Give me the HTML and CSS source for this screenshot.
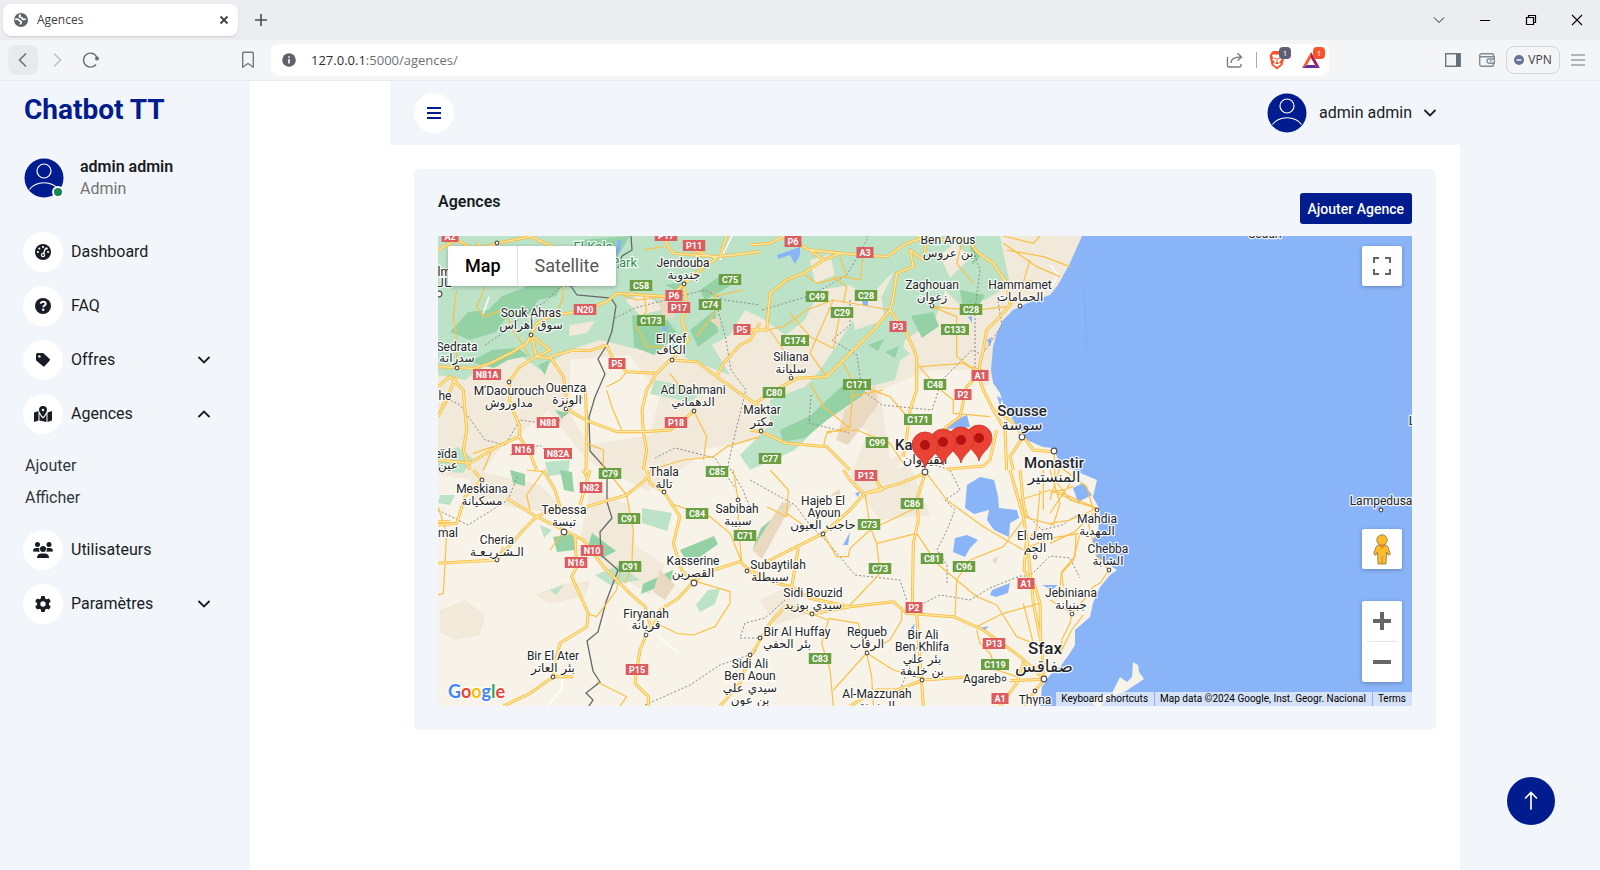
FILE: index.html
```html
<!DOCTYPE html>
<html lang="fr">
<head>
<meta charset="utf-8">
<title>Agences</title>
<link rel="stylesheet" href="styles.css">
</head>
<body>
<svg width="0" height="0" class="defs" aria-hidden="true">
  <symbol id="user" viewBox="0 0 40 40">
    <circle cx="20" cy="20" r="19.5" fill="#001c8e"/>
    <g fill="none" stroke="#fff" stroke-width="1.2"><circle cx="20" cy="13" r="7"/><path d="M5.5 31.5C12 22.500 28 22.500 34.500 31.500"/></g>
  </symbol>
  <symbol id="down" viewBox="0 0 12 12"><path d="M1 3.500l5 5 5-5" fill="none" stroke="#191c24" stroke-width="1.800" stroke-linecap="round"/></symbol>
  <symbol id="up" viewBox="0 0 12 12"><path d="M1 8.500l5-5 5 5" fill="none" stroke="#191c24" stroke-width="1.800" stroke-linecap="round"/></symbol>
</svg>

<header class="browser">
  <div class="tabs">
    <div class="tab">
      <svg width="16" height="16" viewBox="0 0 16 16"><circle cx="8" cy="8" r="7" fill="#5f6368"/><path d="M2 7.500c2-.8 3.500-.3 4.200.8.600 1 1.600.6 2 1.600.3 1-.9 1.300-.7 2.600M7.500 2.500c-.5 1.300-1.500 1-1 2.200.6 1 2.300.2 2.700 1.500.3 1.200 1.700 1.600 3.600.8" fill="none" stroke="#fff" stroke-width="1.700"/></svg>
      <span class="tab-title">Agences</span>
      <button class="bare" aria-label="Close tab"><svg width="10" height="10" viewBox="0 0 10 10"><path d="M1.500 1.500l7 7M8.500 1.500l-7 7" stroke="#3c4043" stroke-width="1.800"/></svg></button>
    </div>
    <button class="bare" aria-label="New tab"><svg width="14" height="14" viewBox="0 0 14 14"><path d="M7 1v12M1 7h12" stroke="#474a4e" stroke-width="1.600"/></svg></button>
    <div class="window-buttons">
      <button class="bare" aria-label="Search tabs"><svg width="12" height="12" viewBox="0 0 12 12"><path d="M1 3.500l5 5 5-5" fill="none" stroke="#222"/></svg></button>
      <button class="bare" aria-label="Minimize"><svg width="12" height="12" viewBox="0 0 12 12"><path d="M1 6.500h10" stroke="#000"/></svg></button>
      <button class="bare" aria-label="Restore"><svg width="12" height="12" viewBox="0 0 12 12"><path d="M1.500 3.500h7v7h-7zM3.500 3.500v-2h7v7h-2" fill="none" stroke="#000" stroke-width="1.200"/></svg></button>
      <button class="bare" aria-label="Close"><svg width="12" height="12" viewBox="0 0 12 12"><path d="M1 1l10 10M11 1L1 11" stroke="#000" stroke-width="1.100"/></svg></button>
    </div>
  </div>
  <div class="toolbar">
    <div class="nav-buttons">
      <button class="bare back" aria-label="Back"><svg width="16" height="16" viewBox="0 0 16 16"><path d="M11 1.500L4.500 8l6.500 6.500" fill="none" stroke="#5f7079" stroke-width="1.500"/></svg></button>
      <button class="bare" aria-label="Forward"><svg width="16" height="16" viewBox="0 0 16 16"><path d="M5 1.500L11.500 8 5 14.500" fill="none" stroke="#b9c3c8" stroke-width="1.500"/></svg></button>
      <button class="bare" aria-label="Reload"><svg width="18" height="16" viewBox="0 0 18 16"><path d="M15 5.500A7 7 0 1 0 14 12.500" fill="none" stroke="#5f7079" stroke-width="1.400"/><circle cx="15" cy="6.500" r="2" fill="#5f7079"/></svg></button>
      <button class="bare mark" aria-label="Bookmark"><svg width="14" height="18" viewBox="0 0 14 18"><path d="M1.700 2.500q0-1.300 1.300-1.300h8q1.300 0 1.300 1.300v13.800L7 12.500l-5.300 3.800z" fill="none" stroke="#6d7b83" stroke-width="1.400" stroke-linejoin="round"/></svg></button>
    </div>
    <div class="address">
      <svg width="14" height="14" viewBox="0 0 14 14"><circle cx="7" cy="7" r="6.800" fill="#5f6368"/><path d="M7 6v4.500M7 3.200v1.600" stroke="#fff" stroke-width="1.600"/></svg>
      <div class="url"><b>127.0.0.1</b>:5000/agences/</div>
      <button class="bare share" aria-label="Share"><svg width="18" height="18" viewBox="0 0 18 18"><path d="M1.500 6v8.500q0 1.500 1.500 1.500h10.500q1.500 0 1.500-1.500V13M5 12c0-4 3-6 10-6M11.500 2.200L15.500 6l-4 3.800" fill="none" stroke="#7b8083" stroke-width="1.400"/></svg></button>
      <i class="divider"></i>
      <button class="bare badge-holder" aria-label="Shields"><svg width="18" height="20" viewBox="0 0 18 20"><path d="M5 1h7l3 2 1.500 3-2 9L9 19.500 3.500 15l-2-9L3 3z" fill="#fb542b"/><path d="M4 5l3-.7 2 .6 2-.6 3 .7-1 3 .5 2-2.500 2L13 14l-4 3-4-3 2-2-2.500-2L5 8z" fill="#fff"/><path d="M6 8l2 .8M12 8l-2 .8M9 8v4l-1.500 1.500h3L9 12" stroke="#fb542b" fill="none"/></svg><span class="badge">1</span></button>
      <button class="bare badge-holder" aria-label="Rewards"><svg width="20" height="18" viewBox="0 0 20 18"><path d="M10 1L1 17l5-3 4-7z" fill="#ff5a2e"/><path d="M10 1l9 16-5-3-4-7z" fill="#9e1f63"/><path d="M1 17h18l-5-3H6z" fill="#662d91"/></svg><span class="badge hot">1</span></button>
    </div>
    <div class="extras">
      <button class="bare panel" aria-label="Sidebar"><svg width="16" height="14" viewBox="0 0 16 14"><path d="M.7.7h14.600v12.600H.7z" fill="none" stroke="#6a7b84" stroke-width="1.400"/><path d="M11 1h4v12h-4z" fill="#5f7079"/></svg></button>
      <button class="bare" aria-label="Wallet"><svg width="16" height="14" viewBox="0 0 16 14"><path d="M14.500 4V2q0-1.300-1.500-1.300H2.500Q.7.700.7 2.500v9q0 1.700 1.800 1.700H13q1.500 0 1.500-1.500v-1.500M1 3.700h14.300v6.500H10q-2-.2-2-2.200t2-2h5M11 8h1.500" fill="none" stroke="#7f8e96" stroke-width="1.400"/></svg></button>
      <button class="bare vpn"><svg width="10" height="10" viewBox="0 0 10 10"><circle cx="5" cy="5" r="5" fill="#6b7194"/><path d="M2.500 5h5" stroke="#fff" stroke-width="1.400"/></svg>VPN</button>
      <button class="bare" aria-label="Menu"><svg width="14" height="12" viewBox="0 0 14 12"><path d="M0 1h14M0 6h14M0 11h14" stroke="#6a7b84" stroke-width="1.200"/></svg></button>
    </div>
  </div>
</header>

<div class="page">
  <aside class="sidebar">
    <h1 class="brand"><a href="#">Chatbot TT</a></h1>
    <div class="profile">
      <div class="portrait"><svg width="40" height="40"><use href="#user"/></svg><i class="online"></i></div>
      <div><div class="name">admin admin</div><div class="role">Admin</div></div>
    </div>
    <nav class="menu">
      <a class="item" href="#"><span class="disc"><svg width="16" height="16" viewBox="0 0 16 16"><circle cx="8" cy="8" r="8" fill="#191c24"/><g fill="#fff"><circle cx="8" cy="3" r="1.100"/><circle cx="4.300" cy="4.500" r="1.100"/><circle cx="2.900" cy="8" r="1.100"/><circle cx="13.100" cy="8" r="1.100"/><circle cx="11.800" cy="4.600" r="1.100"/><circle cx="8" cy="11" r="2.200"/></g><path d="M8 11l2.500-6.800" stroke="#fff" stroke-width="1.300" stroke-linecap="round"/><circle cx="8" cy="11" r="1" fill="#191c24"/></svg></span><span class="label">Dashboard</span></a>
      <a class="item" href="#"><span class="disc"><svg width="16" height="16" viewBox="0 0 16 16"><circle cx="8" cy="8" r="8" fill="#191c24"/><path d="M5.700 5.800c0-2.800 5-2.600 5 .1 0 1.600-2.500 1.700-2.500 3.300" fill="none" stroke="#fff" stroke-width="1.900"/><circle cx="8.200" cy="11.800" r="1.200" fill="#fff"/></svg></span><span class="label">FAQ</span></a>
      <a class="item" href="#"><span class="disc"><svg width="16" height="16" viewBox="0 0 16 16"><path d="M1 2.500Q1 1 2.500 1h5q.7 0 1.200.5l5.800 5.300q1 1 0 2l-4.700 5.200q-1 1-2 0L1.500 8.700Q1 8.200 1 7.500z" fill="#191c24"/><circle cx="4.400" cy="4.400" r="1.200" fill="#fff"/></svg></span><span class="label">Offres</span><svg class="caret" width="12" height="12"><use href="#down"/></svg></a>
      <a class="item" href="#"><span class="disc"><svg width="18" height="16" viewBox="0 0 18 16"><g fill="#191c24"><path d="M9 0a4 4 0 0 1 4 4c0 2-2 4.500-4 7C7 8.500 5 6 5 4a4 4 0 0 1 4-4zM0 6.500L4.500 5v9.500L0 16zM13.500 6.500L18 5v9.500L13.500 16zM5.500 8q1.500 3 3.500 4.500Q11 11 12.500 8v8l-7-1.500z"/></g><circle cx="9" cy="4" r="1.200" fill="#fff"/></svg></span><span class="label">Agences</span><svg class="caret" width="12" height="12"><use href="#up"/></svg></a>
      <div class="submenu"><a href="#">Ajouter</a><a href="#">Afficher</a></div>
      <a class="item" href="#"><span class="disc"><svg width="20" height="16" viewBox="0 0 20 16"><g fill="#191c24"><circle cx="4.500" cy="2.500" r="2.500"/><circle cx="16" cy="2.500" r="2.500"/><circle cx="10" cy="7" r="3"/><path d="M4 16q0-4.600 4.500-4.600h3q4.500 0 4.500 4.600zM0 9.500Q0 6 3 6h3l.6.3Q5.500 8 6.700 9.800zM20 9.500Q20 6 17 6h-3l-.6.300q1.100 1.700-.1 3.500z"/></g></svg></span><span class="label">Utilisateurs</span></a>
      <a class="item" href="#"><span class="disc"><svg width="16" height="16" viewBox="0 0 16 16"><g fill="#191c24"><rect x="6" y="0" width="4" height="16" rx="1"/><rect x="6" y="0" width="4" height="16" rx="1" transform="rotate(60 8 8)"/><rect x="6" y="0" width="4" height="16" rx="1" transform="rotate(120 8 8)"/><circle cx="8" cy="8" r="6"/></g><circle cx="8" cy="8" r="2.700" fill="#fff"/></svg></span><span class="label">Paramètres</span><svg class="caret" width="12" height="12"><use href="#down"/></svg></a>
    </nav>
  </aside>

  <div class="content">
    <div class="topbar">
      <button class="bare burger" aria-label="Menu"><svg width="14" height="12" viewBox="0 0 14 12"><path d="M0 1h14M0 6h14M0 11h14" stroke="#001c8e" stroke-width="2"/></svg></button>
      <button class="bare account"><svg width="40" height="40"><use href="#user"/></svg><span>admin admin</span><svg width="12" height="12"><use href="#down"/></svg></button>
    </div>
    <main class="card">
      <div class="card-head"><h2>Agences</h2><button class="add">Ajouter Agence</button></div>
      <section class="map" aria-label="Map">
        <svg class="tiles" viewBox="438 236 974 470" preserveAspectRatio="xMidYMid slice">
          <defs>
            <path id="r5" d="M24 410L130 415 180 400 250 365 290 340 303 315M360 380L430 360 480 362 530 345M360 380L400 440 415 540 470 572 560 605 640 605 720 600 760 570 792 543M466 480L470 572 468 720M640 605L636 540 650 480 680 430 720 390 800 395 860 440 930 490 990 530M860 440L880 400 930 345 960 330 990 280M530 345L550 390 590 425 680 430M700 18L715 50 730 70 860 80 910 75 990 65M760 50L860 85 810 120 762 162 720 200 560 190 530 215 450 245 370 255 320 280 303 315M762 162L770 230 755 270 775 330 730 385M24 470L60 440 100 480 110 600 100 660 120 720M24 60L80 30 140 60 200 40 300 20 370 50M303 315L320 380 360 385M24 690L120 700 200 650 268 620 270 590 240 520 237 456 270 410 310 385 360 360 303 315M268 620L300 670 320 720M640 605L650 660 640 720M150 40L100 90 60 120 24 120M890 18L870 80M24 560L80 440"/>
            <path id="r6" d="M500 18L560 30 650 25 680 65 730 100 770 160 780 225 740 270 710 300 700 360 690 400 685 440 700 480 730 540 765 600 770 720M0 45L60 40 100 20 180 60 220 90 270 70 340 75 410 80 470 40 530 20M530 30L520 90 480 60 490 110 440 130 430 200 420 240 440 270 470 310 500 380 500 480 480 540 470 620 460 680M420 240L370 300 310 360 230 440 140 445 60 490 0 530M0 300L50 300 60 190 110 150 160 130 220 90M690 430L650 470 630 560 590 590 540 650M0 600L33 605 110 640 230 650 270 690 300 720M730 540L780 570 820 620 850 660 910 665M820 620L780 680 790 720M590 718L700 708 720 690 740 600M180 60L280 70"/>
            <path id="r7" d="M230 85L320 140 400 180 460 210 520 290 600 370 645 410 665 480M320 140L280 180 200 270 24 280M24 165L80 160 105 80 155 30 130 0M435 200L440 290 425 320 475 430 470 470 390 520 380 560 370 620 300 670 220 708M370 620L430 620M320 140L390 110 375 60 340 0M450 105L480 0M470 110L590 75 640 35 670 0M650 0L660 40 702 66 750 140 730 220 755 300 790 335 745 385 690 420 665 480M790 335L850 300 930 275 990 330M648 495L630 540 620 600 615 640 655 680 655 708M960 554L930 640 870 708M24 155L60 155M460 0L475 30"/>
            <path id="r8" d="M525 10L500 90 505 150 490 220 487 400 500 430 515 640 520 708M525 10L450 40 345 70 300 120 220 190 140 230 60 270 0 300M340 70L300 30 280 0M345 70L395 60 380 30M145 235L125 350 80 340 0 300M125 350L180 385 300 410 430 395 470 430 610 440 700 480 810 560 883 628M185 432L110 405 60 460 0 560M185 432L250 420 300 410M780 0L800 70 820 140 830 200 822 300 855 350 870 400 872 500 883 628M830 200L850 400 870 500M875 600L820 580 800 640 750 708M883 628L780 632M660 620L520 630 440 660 380 660 300 708M883 628L820 708M810 0L820 100 830 140"/>
            <path id="m5" d="M80 180L70 260 80 330 80 410M165 170L140 230 160 260 220 240 250 300 300 380M640 190L650 240 620 290 650 350 700 350M850 180L860 240 800 320M330 60L280 90M395 150L400 200 380 250M660 720L760 690 850 680 890 650 990 620M792 543L830 620 820 690M720 430L765 490M530 470L570 450 590 425M530 480L545 530 575 600M940 180L850 200M560 190L620 210 700 200M470 640L520 660 520 720M130 670L190 650 160 720M60 500L24 560M640 60L700 50"/>
            <path id="m6" d="M50 300L100 290 170 240 250 210 420 240M270 250L250 355 180 320 120 250M340 75L330 150 280 140 200 160 160 130M280 220L290 170 250 140M545 230L620 260 620 380 660 410 700 420M545 230L600 235 680 240 770 230M280 400L310 460 300 590 230 610 220 650M310 460L420 500 480 570M500 400L560 470 610 510 610 550 720 560M510 410L640 400 690 430M60 300L100 360 123 440M760 40L860 110 930 140M840 90L810 190 780 225M770 60L880 80 960 110M230 605L320 600 420 640 460 700M250 210L180 370 230 440M760 18L850 40 870 18M270 80L290 140M640 20L620 100 670 160M300 500L400 480M180 460L220 530 300 595M730 180L850 150"/>
            <path id="m7" d="M590 75L610 180 605 290 585 340M545 20L590 75M720 100L840 140 900 190 935 275 925 170 924 90 910 0M690 465L740 490 790 495 855 470 900 400 900 365 850 350 800 335M500 635L590 680 570 708M470 430L500 440 560 360 570 300M24 110L50 190 40 370 24 375M290 0L340 5 290 75 300 120M200 270L220 230M400 185L360 240"/>
            <path id="m8" d="M345 70L360 170 380 220 390 310 300 405M380 220L500 190 560 280 620 330 680 380 740 405 800 500 850 520M360 180L505 110M530 10L590 90 700 170 820 240M660 270L620 330 615 440M660 270L760 230 820 150M680 470L760 430 870 400M185 432L235 450 215 520 240 600 250 708M235 445L325 460 350 549 420 510 455 450 455 410M350 549L365 620 370 708M350 549L430 600 515 625M680 480L690 520 720 550 740 600 800 620M820 400L850 520M219 191L260 260 295 260 300 235 360 180M870 60L860 180 840 200M880 0L880 120M810 90L900 60 990 100M990 190L900 205 840 230M990 190L970 270 935 310 940 350M110 140L50 110M110 140L115 60 60 0M350 549L250 660M820 140L910 165 930 100 900 0M110 130L180 180"/>
            <path id="m9" d="M12 150L15 240 60 300 140 325M0 300L30 200M0 280L70 260M0 370L60 360 130 330M0 340L60 250M15 270L140 325M78 400L75 470 35 515 30 560 65 640M0 430L75 395 140 330M115 370L140 470 177 510 150 550 130 560 110 590 65 640 60 670 35 720 35 760M30 200L110 260 130 330M100 645L65 690 35 750M0 600L65 640"/>
          </defs>
          <rect x="438" y="236" width="974" height="470" fill="#f8f3e9"/>
          <g fill="#f1e9da">
            <path d="M438 236h650v90l-80 20-20 40-60 10-30 70-30 25-20-10 20-50-40-20-60 60-60-20-60 40-60-30-40-50-50 40-20 30-60-10-60 20-24-20z"/>
            <path d="M440 610l25-10 20 15-5 20-25 5-15-8zM535 595l30-12 25-2-5 15-35 8zM590 490l40 15 5 40 30 20-15 30-40-25-30-30zM850 480l60-15 20 50-50 5zM760 600l30-15 15 30-30 10zM470 470l70 15 30 30-40-5-60-10z"/>
          </g>
          <g fill="#f8f3e9"><path d="M570 360l60-5 30 40-10 40-60 10-20-30zM880 390l50-20 50 0 0 60-60 10-30 20zM700 450l60-10 30 40-60 20z"/></g>
          <g fill="#bce3c8">
            <path d="M438 236H930L905 262 885 280 868 300 850 285 820 290 805 320 785 335 765 320 745 310 730 335 712 345 730 375 690 360 665 345 640 350 600 340 570 350 540 370 520 355 490 362 465 380 438 375zM930 236H1000L1010 285 985 300 960 305 940 285 905 290 880 300 900 260zM820 370l40-60 50-30 35 10-10 30-30 20-10 40-40 10-60 60-45 20-10-15 40-40zM655 380l50 10-15 12-40-8zM770 400l40-15-20 40-20 0zM438 455l20-8 15 12-10 14-25-2zM545 462l25-2-2 14-20 2zM642 508l30 5-5 18-25-8zM696 605l12-15 12-1-5 15-15 8zM540 525l12 5-8 8zM550 590l14-5-8 10zM595 575l25-10 20 15-30 5zM440 495l15 0-5 10-12-2zM440 370l25-25 20 30zM866 348l30-8 14 14-28 18-22 2z"/>
          </g>
          <g fill="#f1e9da"><path d="M625 300l20-6 20 15-25 6zM570 325l25-4-8 12-18 3zM780 345l20-10 15 20-20 20zM850 300l30-10 5 30-30 10zM940 255l15-12 15 15-20 20zM750 345l25-5-5 40-20-10zM810 260l20-5 5 20-20 8zM1000 236h82l-24 50-20 14-20-15zM660 330l15 5-5 15z"/></g>
          <g fill="#94d2a6">
            <path d="M450 332l18-20 20-2 14-14 22-8 6-12 18-6 16 12-8 14-18 4-8 14-24 4-10 14-26 8zM470 362l22-12 26-2 10 8-20 4-14 8zM632 315l35 5 12 15-25 20-20-8zM690 330l25-20 3 22-20 15zM580 240l50-4-12 20-30 8zM780 430l30-14 32-30 30-8-10 18-35 24-22 18-22 4zM911 316l22-4 6 14-17 12zM553 537l20-3 2 16-18 2zM592 533l24 18-14 7-14-12zM680 550l34-14 4 8-18 13-16 0zM643 584l30-14-2 12-30 12zM560 470l12 2 2 20-10-2zM753 548l8-20 12-10 7 2-8 14-16 16zM700 290l20-14 10 10-25 14zM960 290l25 5-8 14-15-6zM538 365l12-5-5 15zM555 410l14 3-8 5zM510 470l15 4 0 12-12-3zM665 285l25-5-10 12zM970 245l10 12-8 8zM857 421l10-6-3 10zM868 345l16-6-6 12zM885 352l14-6-4 12z"/>
          </g>
          <g fill="#ead9c1"><path d="M845 410l30-25 3 20-30 40-12-5zM658 295l20 12-5 12-12-4zM752 550l30-48 10 2-30 55zM660 570l15 15-10 15-12-8zM830 495l10-6 0 8zM992 560l6-4-2 8zM710 320l10-3 0 12z"/></g>
          <g fill="#8ab4f8">
            <path d="M1082 236L1070 263 1058 285 1050 295 1030 302 1013 310 1003 320 997 333 993 347 991 370 993 383 1000 393 1003 403 1013 420 1017 427 1027 440 1043 447 1053 448 1060 463 1073 470 1097 480 1093 497 1100 510 1098 533 1092 540 1097 557 1117 570 1110 575 1100 587 1093 603 1090 617 1075 630 1075 645 1070 653 1060 667 1050 675 1042 687 1040 706H1412V236z"/>
            <path d="M967 485l13-8 14 3 4 16 1 12 18 2 2 8-9 5-1 14-15-7-7-10 2-10-15 4-9-6zM955 538l12-3 11 5-8 8-5 9-12-5zM992 590l18-7-2 10-12 4-6-2zM980 628l9-2-5 5zM907 633l8-10-2 10-5 4zM843 545l7-13-2 13zM950 422l17-7 3 12-23 2zM777 255l23-8 0 8-5 9-5-9-12 4zM987 340l5-3-2 10zM1073 488l10-5 9 12-14 7zM1042 585l16 0-6 5zM862 300l6-2 0 8-5 0zM855 493l5-1-2 5zM617 240l4 0 0 10-5 5zM968 317l4-1 0 7zM661 328l8-2-4 6zM997 396l5 3-2 7z"/>
          </g>
          <path fill="#f8f3e9" d="M1112 693l8-16 7 5 5-5 1-15 5 3 1 7 5 7-18 12-20 8-7 10-10-9 12-4z"/>
          <path d="M1084 290l3 60" stroke="#84adf0" stroke-width="1"/>
          <g class="districts">
            <path d="M485 345l15-10 30-25 15-8 15-15 25-2M615 318l20-10 30-8 40-10 20 10 35 5M718 310l8 30 5 30 15 20-10 40-8 35 15 25 10 25M440 395l20 10 25 35 20 5 15-25 35 5 30-30M655 458l20-10 40 10 20 30M762 310l50-15 35-20 20-35 5-40M850 300l0 25-18 15 25 15 5 35 20 15 50 5 10-30 30-30 10 5 20-30-5-30M970 240l10 30-5 40 0 60M750 480l45 25 15 20 20 20 25 30 45 5 10 30 30-15 30 5 20-12 30-12 10 0 20-20 20 2 10 20M945 500l10 10-8 20-10 20 10 15 0 20M900 690l20-50M438 510l30 15 40-25 10-25M645 705l45-20 30-20 35-12 5-15-20 0 5-15 20-5 20-18M1022 510l20 20 20-5 15-10M550 455l-10-10-30 10M811 395l-2 28 40 10M920 460l30 10 10 20-15 10"/>
          </g>
          <g class="white-roads"><path d="M658 635l10 10 10 7M548 706l14-18 0-15M489 297l-6 17M735 230l-15 30M1050 265l8 10-8 15"/></g>
          <path class="border" d="M631 236l1 14-10 6-4 12M570 285l7 10 34 3 5 8-4 25-5 14-9 14 7 15-10 23-6 20 1 34 17 19 0 32 5 16-12 14 1 23 17 15-12 32-8 30-11 9 6 30 7 11-14 11 7 7-6 9"/>
          <g class="minor">
            <g transform="translate(430 230) scale(.33333)"><use href="#m5"/></g><g transform="translate(750 230) scale(.33333)"><use href="#m6"/></g><g transform="translate(430 470) scale(.33333)"><use href="#m7"/></g><g transform="translate(750 470) scale(.33333)"><use href="#m8"/></g><g transform="translate(1050 400) scale(.33333)"><use href="#m9"/></g>
          </g>
          <g class="major">
            <g transform="translate(430 230) scale(.33333)"><use href="#r5"/></g><g transform="translate(750 230) scale(.33333)"><use href="#r6"/></g><g transform="translate(430 470) scale(.33333)"><use href="#r7"/></g><g transform="translate(750 470) scale(.33333)"><use href="#r8"/></g>
          </g>
          <g class="major-fill">
            <g transform="translate(430 230) scale(.33333)"><use href="#r5"/></g><g transform="translate(750 230) scale(.33333)"><use href="#r6"/></g><g transform="translate(430 470) scale(.33333)"><use href="#r7"/></g><g transform="translate(750 470) scale(.33333)"><use href="#r8"/></g>
          </g>
          <g id="places"></g>
          <g id="shields"></g>
          <g id="pins"></g>
        </svg>
        <div class="map-type"><button class="on">Map</button><button>Satellite</button></div>
        <button class="control full" aria-label="Fullscreen"><svg width="18" height="18" viewBox="0 0 18 18"><path d="M1 6V1h5M12 1h5v5M17 12v5h-5M6 17H1v-5" fill="none" stroke="#666" stroke-width="2"/></svg></button>
        <div class="controls-right">
          <button class="control" aria-label="Street View"><svg width="18" height="31" viewBox="0 0 18 31"><g fill="#fbbc2c" stroke="#8a7440" stroke-width=".8"><path d="M5 11h8l2 2 2.300 7-2 1.300-1.800-3.300-.5 12H5l-.5-12-1.800 3.300-2-1.300L3 13z"/><circle cx="9" cy="6" r="5.200"/></g><path d="M6 11h6l-3 4z" fill="#e8802a"/><path d="M9 22v8" stroke="#b5872b" stroke-width=".8"/></svg></button>
          <div class="zoom"><button aria-label="Zoom in"><svg width="18" height="18" viewBox="0 0 18 18"><path d="M9 0v18M0 9h18" stroke="#666" stroke-width="4"/></svg></button><i></i><button aria-label="Zoom out"><svg width="18" height="18" viewBox="0 0 18 18"><path d="M0 9h18" stroke="#666" stroke-width="4"/></svg></button></div>
        </div>
        <a class="logo" href="#"><span class="b">G</span><span class="r">o</span><span class="y">o</span><span class="b">g</span><span class="g">l</span><span class="r">e</span></a>
        <div class="legal"><button>Keyboard shortcuts</button><span>Map data ©2024 Google, Inst. Geogr. Nacional</span><a href="#">Terms</a></div>
      </section>
    </main>
  </div>
  <div class="gutter"></div>
</div>
<a class="to-top" href="#" aria-label="Haut de page"><svg width="14" height="20" viewBox="0 0 14 20"><path d="M7 18V2M1.500 7L7 1.500 12.500 7" fill="none" stroke="#fff" stroke-width="1.700" stroke-linecap="round"/></svg></a>
<script src="map.js"></script>
</body>
</html>
```
FILE: styles.css
```css
* { box-sizing: border-box; }
body { margin: 0; min-height: 100vh; display: flex; flex-direction: column; background: #fff; color: #191c24; font: 16px/24px Roboto, "Noto Sans", sans-serif; }
a { color: inherit; text-decoration: none; }
svg { display: block; flex: none; }
button { font: inherit; color: inherit; padding: 0; border: 0; cursor: pointer; }
h1, h2 { margin: 0; }
.defs { position: absolute; }
.bare { background: none; display: flex; align-items: center; justify-content: center; }

/* browser frame */
.browser { font-family: "Open Sans", sans-serif; color: #3c4043; }
.tabs { height: 40px; display: flex; align-items: center; gap: 16px; padding-left: 3px; background: #ecedf0; }
.tab { width: 235px; height: 32px; display: flex; align-items: center; gap: 8px; padding: 0 9px 0 10px; background: #fff; border-radius: 8px; box-shadow: 0 1px 2px #0002; font-size: 12px; }
.tab-title { flex: 1; }
.window-buttons { margin-left: auto; display: flex; }
.window-buttons .bare { width: 46px; height: 40px; }
.toolbar { height: 41px; display: flex; align-items: center; padding: 0 8px; background: #f3f5f7; border-bottom: 1px solid #e8ebee; }
.nav-buttons { width: 263px; display: flex; gap: 4px; padding-right: 8px; }
.nav-buttons .bare { width: 30px; height: 30px; border-radius: 8px; }
.nav-buttons .back { background: #e8eaec; }
.nav-buttons .mark { margin-left: auto; }
.address { flex: 1; height: 32px; display: flex; align-items: center; gap: 8px; padding: 0 6px 0 11px; background: #fff; border-radius: 8px; }
.url { flex: 1; padding-left: 7px; font-size: 13px; color: #6d7278; }
.url b { font-weight: 400; color: #2b2e31; }
.share { margin-right: 4px; }
.divider { width: 1px; height: 16px; background: #aaa; }
.badge-holder { position: relative; width: 24px; height: 24px; }
.badge-holder + .badge-holder { margin-left: 2px; }
.badge { position: absolute; top: -1px; right: -2px; width: 12px; height: 12px; border-radius: 4px; background: #5d6075; color: #fff; font-size: 8px; line-height: 12px; }
.badge.hot { background: #fb542b; }
.extras { width: 263px; display: flex; align-items: center; justify-content: flex-end; gap: 11px; padding-right: 7px; }
.panel { margin-right: 7px; }
.vpn { width: 54px; height: 28px; gap: 4px; border: 1px solid #d0d6da; border-radius: 8px; font-size: 12px; }

/* page */
.page { flex: 1; display: flex; }
.sidebar { width: 250px; background: #f2f6fa; }
.brand { padding: 9px 24px 0; color: #001c8e; font-size: 28px; line-height: 40px; font-weight: 700; }
.profile { display: flex; align-items: center; gap: 16px; padding: 26px 24px 32px; line-height: 22px; }
.portrait { position: relative; }
.online { position: absolute; right: 0; bottom: 0; width: 12px; height: 12px; border: 2px solid #fff; border-radius: 50%; background: #198754; }
.name { font-weight: 600; }
.role { color: #757575; }
.menu { display: flex; flex-direction: column; gap: 14px; padding: 0 40px 0 23px; }
.item { display: flex; align-items: center; gap: 8px; }
.disc { width: 40px; height: 40px; display: grid; place-items: center; background: #fff; border-radius: 50%; }
.label { flex: 1; }
.submenu { display: flex; flex-direction: column; gap: 8px; padding: 6px 0 6px 2px; color: #33363d; }
.content { flex: 1; min-width: 0; padding-left: 140px; }
.gutter { width: 140px; background: #f2f6fa; }
.topbar { height: 64px; display: flex; align-items: center; justify-content: space-between; padding: 0 24px; background: #f2f6fa; }
.burger { width: 40px; height: 40px; background: #fff; border-radius: 50%; }
.account { gap: 12px; }
.card { margin: 24px; padding: 24px; background: #f2f6fa; border-radius: 5px; }
.card-head { display: flex; justify-content: space-between; margin-bottom: 12px; }
.card h2 { font-size: 16px; line-height: 18px; font-weight: 600; }
.add { height: 31px; padding: 0 8px; background: #001c8e; color: #fff; border-radius: 3px; font-size: 14px; font-weight: 500; }

/* map */
.map { position: relative; height: 470px; overflow: hidden; background: #8ab4f8; }
.tiles { position: absolute; width: 100%; height: 100%; }
.districts { fill: none; stroke: #8b8b88; stroke-width: 1; stroke-dasharray: 2 2; }
.white-roads { fill: none; stroke: #fff; stroke-width: 1.5; }
.border { fill: none; stroke: #66696b; stroke-width: 1.3; }
.minor { fill: none; stroke: #fbc046; stroke-width: 3.6; stroke-linejoin: round; }
.major { fill: none; stroke: #fabc3c; stroke-width: 9; stroke-linejoin: round; }
.major-fill { fill: none; stroke: #fdeaa8; stroke-width: 4; stroke-linejoin: round; }
.place { font: 12px Roboto, sans-serif; fill: #222427; stroke: #fff; stroke-width: 2.500px; stroke-opacity: .85; stroke-linejoin: round; paint-order: stroke; text-anchor: middle; }
.place.ar { font: 12px "DejaVu Sans", sans-serif; }
.place.mid { font-size: 13px; }
.place.big { font-size: 15px; }
.place.large { font-size: 17px; }
.place.city { font-size: 15px; font-weight: 500; }
.place.metro { font-size: 17px; font-weight: 500; }
.place.park { font-size: 13px; fill: #2c8f53; }
.dot { fill: #fff; stroke: #555; stroke-width: 1.200; }
.shield { font: bold 9px Roboto, sans-serif; fill: #fff; text-anchor: middle; }
.map-type { position: absolute; left: 10px; top: 10px; display: flex; height: 40px; border-radius: 2px; background: #fff; box-shadow: 0 1px 4px #0004; font-size: 18px; }
.map-type button { padding: 0 17px; background: none; color: #565656; }
.map-type .on { padding-right: 16px; color: #000; font-weight: 500; border-right: 1px solid #e3e3e3; }
.control { width: 40px; height: 40px; display: grid; place-items: center; background: #fff; border-radius: 2px; box-shadow: 0 1px 4px #0004; }
.full { position: absolute; top: 10px; right: 10px; }
.controls-right { position: absolute; right: 10px; bottom: 24px; display: grid; gap: 32px; }
.zoom { background: #fff; border-radius: 2px; box-shadow: 0 1px 4px #0004; }
.zoom button { width: 40px; height: 40px; display: grid; place-items: center; background: none; }
.zoom i { display: block; height: 1px; margin: 0 5px; background: #e6e6e6; }
.logo { position: absolute; left: 10px; bottom: 3px; font: 700 18px/24px Lato, sans-serif; -webkit-text-stroke: 2px #fff; paint-order: stroke; }
.b { color: #4285f4; } .r { color: #ea4335; } .y { color: #fbbc05; } .g { color: #34a853; }
.legal { position: absolute; right: 0; bottom: 0; display: flex; gap: 1px; font-size: 10px; line-height: 14px; color: #000; }
.legal > * { padding: 0 6px 0 5px; background: #f5f5f5b3; color: #000; white-space: nowrap; }

.to-top { position: fixed; right: 45px; bottom: 45px; width: 48px; height: 48px; display: grid; place-items: center; background: #001c8e; border-radius: 50%; }
```
FILE: map.js
```js
const NS = 'http://www.w3.org/2000/svg';
function add(parent, tag, attrs, text) {
  const el = document.createElementNS(NS, tag);
  for (const k in attrs) el.setAttribute(k, attrs[k]);
  if (text) el.textContent = text;
  parent.appendChild(el);
}

// x, baseline, text, class
const labels = [
  [683,267,'Jendouba'],[684,279,'جندوبة','ar'],[531,317,'Souk Ahras'],[531,329,'سوق أهراس','ar'],
  [593,251,'El Kala','park'],[624,267,'Park','park'],[671,343,'El Kef'],[671,354,'الكاف','ar'],
  [457,351,'Sedrata'],[457,362,'سدراتة','ar'],[509,395,"M'Daourouch"],[509,407,'مداوروش','ar'],
  [566,392,'Ouenza'],[567,404,'الونزة','ar'],[693,394,'Ad Dahmani'],[693,406,'الدهماني','ar'],
  [445,400,'he'],[441,276,'elm'],[444,287,'ـالـ','ar'],[446,458,'eïda'],[448,469,'عين','ar'],
  [482,493,'Meskiana'],[482,505,'مسكيانة','ar'],[564,514,'Tebessa'],[564,526,'تبسة','ar'],
  [497,544,'Cheria'],[497,556,'الـشـريـعـة','ar'],[664,476,'Thala'],[664,488,'تالة','ar'],
  [448,537,'mal'],[693,565,'Kasserine'],[693,577,'القصرين','ar'],[646,618,'Firyanah'],[646,629,'فريانة','ar'],
  [553,660,'Bir El Ater'],[553,672,'بئر العاتر','ar'],[737,513,'Sabibah'],[738,525,'سبيبة','ar'],
  [823,505,'Hajeb El'],[824,517,'Ayoun'],[823,529,'حاجب العيون','ar'],[762,414,'Maktar'],[762,426,'مكتر','ar'],
  [791,361,'Siliana'],[791,373,'سليانة','ar'],[948,244,'Ben Arous'],[948,257,'بن عروس','ar'],
  [932,289,'Zaghouan'],[932,301,'زغوان','ar'],[1020,289,'Hammamet'],[1020,301,'الحمامات','ar'],
  [1022,416,'Sousse','city'],[1022,430,'سوسة','ar big'],[925,450,'Kairouan','city'],[925,464,'القيروان','ar mid'],
  [1054,468,'Monastir','city'],[1054,482,'المنستير','ar big'],[778,569,'Subaytilah'],[770,581,'سبيطلة','ar'],
  [813,597,'Sidi Bouzid'],[813,609,'سيدي بوزيد','ar'],[797,636,'Bir Al Huffay'],[787,648,'بئر الحفي','ar'],
  [867,636,'Regueb'],[867,648,'الرقاب','ar'],[923,639,'Bir Ali'],[922,651,'Ben Khlifa'],[922,663,'بئر علي','ar'],[922,675,'بن خليفة','ar'],
  [1035,540,'El Jem'],[1035,552,'الجم','ar'],[1071,597,'Jebiniana'],[1071,609,'جبنيانة','ar'],
  [1097,523,'Mahdia'],[1097,535,'المهدية','ar'],[1108,553,'Chebba'],[1108,565,'الشابة','ar'],
  [1045,654,'Sfax','metro'],[1044,672,'صفاقس','ar large'],[982,683,'Agareb'],[1035,704,'Thyna'],
  [877,698,'Al-Mazzunah'],[877,710,'المزونة','ar'],[750,668,'Sidi Ali'],[750,680,'Ben Aoun'],[750,692,'سيدي علي','ar'],[750,704,'بن عون','ar'],
  [1381,505,'Lampedusa'],[1412,425,'L'],[1265,238,'Scauri']
];
const dots = [[684,284],[531,335],[672,360],[457,368],[509,382],[566,409],[694,411],[482,480],[497,560],[664,492],
  [646,635],[553,677],[738,500],[823,534],[761,431],[791,378],[932,306],[1020,306],[747,571],[812,614],[760,638],
  [867,653],[922,680],[1035,557],[1072,614],[1097,510],[1109,570],[1004,679],[1035,691],[750,655],[1381,510],[497,243]];
const cityDots = [[564,532],[694,583],[1022,437],[925,472],[1054,451],[1044,679],[439,294]];

const places = document.getElementById('places');
dots.forEach(([cx, cy]) => add(places, 'circle', { cx, cy, r: 1.8, class: 'dot' }));
cityDots.forEach(([cx, cy]) => add(places, 'circle', { cx, cy, r: 2.8, class: 'dot' }));
labels.forEach(([x, y, text, kind]) => add(places, 'text', { x, y, class: 'place ' + (kind || '') }, text));

const red = [['A2',450,236],['P17',666,235],['P11',694,245],['P6',674,295],['P17',679,307],['N20',585,309],['P5',742,329],
  ['N81A',487,374],['P5',617,363],['N88',548,422],['P18',676,422],['N16',523,449],['N82A',558,453],['P6',793,241],['A3',865,252],
  ['P3',898,326],['A1',980,375],['P2',963,394],['P12',866,475],['N82',591,487],['N10',592,550],['N16',576,562],['P15',637,669],
  ['A1',1026,583],['P2',914,607],['P13',994,643],['A1',1000,698]];
const green = [['C58',641,285],['C75',730,279],['C74',710,304],['C173',651,320],['C79',610,473],['C85',717,471],['C49',817,296],
  ['C28',866,295],['C29',842,312],['C28',971,309],['C133',955,329],['C174',795,340],['C171',857,384],['C48',935,384],['C80',774,392],
  ['C171',918,419],['C99',877,442],['C77',770,458],['C91',629,518],['C84',697,513],['C71',745,535],['C91',630,566],['C86',912,503],
  ['C73',869,524],['C81',932,558],['C73',880,568],['C96',964,566],['C83',820,658],['C119',995,664]];
const shields = document.getElementById('shields');
function shield(fill) {
  return ([name, x, y]) => {
    const w = 6 + 5.5 * name.length;
    add(shields, 'rect', { x: x - w / 2, y: y - 5, width: w, height: 11, fill });
    add(shields, 'text', { x, y: y + 4, class: 'shield' }, name);
  };
}
red.forEach(shield('#dc5c5f'));
green.forEach(shield('#6a9f43'));

const pins = document.getElementById('pins');
[[979,438],[961,440],[943,442],[925,445]].forEach(([x, y]) => {
  add(pins, 'path', { d: `M${x} ${y + 23}c-1-8-13-13-13-23a13 13 0 0 1 26 0c0 10-12 15-13 23z`, fill: '#ea4335', stroke: '#c5352a', 'stroke-width': .8 });
  add(pins, 'circle', { cx: x, cy: y, r: 5, fill: '#b31412' });
});
```
